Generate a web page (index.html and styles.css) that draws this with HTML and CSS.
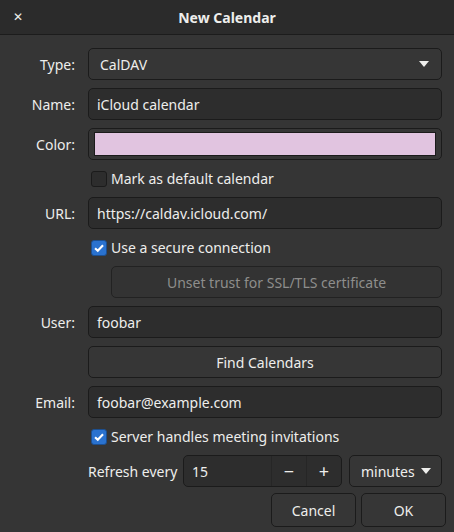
FILE: index.html
```html
<!DOCTYPE html>
<html lang="en">
<head>
    <meta charset="UTF-8">
    <title>New Calendar</title>
    <link rel="stylesheet" href="styles.css">
</head>
<body>
    <div class="titlebar">
        <span class="close">&#x2715;</span>
        <span class="title">New Calendar</span>
    </div>

    <div class="form">
        <label class="lbl">Type:</label>
        <div class="field combo">
            <span>CalDAV</span>
            <span class="arrow"></span>
        </div>

        <label class="lbl">Name:</label>
        <div class="field entry">iCloud calendar</div>

        <label class="lbl">Color:</label>
        <div class="field color-btn"><div class="swatch"></div></div>

        <div class="check-row">
            <span class="box"></span>
            <span>Mark as default calendar</span>
        </div>

        <label class="lbl">URL:</label>
        <div class="field entry">https://caldav.icloud.com/</div>

        <div class="check-row">
            <span class="box checked">
                <svg viewBox="0 0 16 16" width="16" height="16"><path d="M3.5 8.2 L6.6 11.2 L12.6 4.8" fill="none" stroke="#fff" stroke-width="2.4"/></svg>
            </span>
            <span>Use a secure connection</span>
        </div>

        <div class="field btn disabled indent">Unset trust for SSL/TLS certificate</div>

        <label class="lbl">User:</label>
        <div class="field entry">foobar</div>

        <div class="field btn">Find Calendars</div>

        <label class="lbl">Email:</label>
        <div class="field entry">foobar@example.com</div>

        <div class="check-row">
            <span class="box checked">
                <svg viewBox="0 0 16 16" width="16" height="16"><path d="M3.5 8.2 L6.6 11.2 L12.6 4.8" fill="none" stroke="#fff" stroke-width="2.4"/></svg>
            </span>
            <span>Server handles meeting invitations</span>
        </div>

        <div class="refresh-row">
            <span class="refresh-lbl">Refresh every</span>
            <div class="spin">
                <span class="spin-val">15</span>
                <span class="spin-btn">&minus;</span>
                <span class="spin-btn">+</span>
            </div>
            <div class="units">
                <span>minutes</span>
                <span class="arrow"></span>
            </div>
        </div>
    </div>

    <div class="actions">
        <div class="btn action">Cancel</div>
        <div class="btn action">OK</div>
    </div>
</body>
</html>
```

FILE: styles.css
```css
body {
    margin: 0;
    background-color: #353535;
    color: #eeeeec;
    font-family: "Noto Sans", "DejaVu Sans", sans-serif;
    font-size: 14px;
    width: 454px;
    height: 532px;
    overflow: hidden;
}

/* barra de título */
.titlebar {
    height: 34px;
    background-color: #2b2b2b;
    border-bottom: 1px solid #1c1c1c;
    display: flex;
    align-items: center;
    justify-content: center;
    position: relative;
}

.title {
    font-weight: bold;
}

.close {
    position: absolute;
    left: 13px;
    top: 8px;
    font-size: 12px;
    font-weight: bold;
}

/* formulario */
.form {
    display: grid;
    grid-template-columns: 75px 1fr;
    column-gap: 13px;
    row-gap: 8px;
    padding: 13px 12px 0 0;
}

.lbl {
    text-align: right;
    align-self: center;
}

.field {
    grid-column: 2;
    height: 32px;
    box-sizing: border-box;
    border: 1px solid #1b1b1b;
    border-radius: 5px;
    display: flex;
    align-items: center;
}

.entry {
    background-color: #2d2d2d;
    padding-left: 8px;
}

.combo {
    background-color: #363636;
    padding: 0 12px 0 11px;
    justify-content: space-between;
}

.arrow {
    width: 0;
    height: 0;
    border-left: 5px solid transparent;
    border-right: 5px solid transparent;
    border-top: 6px solid #eeeeec;
}

.color-btn {
    background-color: #363636;
    padding: 4px 5px;
}

.swatch {
    flex: 1;
    height: 100%;
    background-color: #e1c4e0;
    border: 1px solid #1b1b1b;
}

.btn {
    background-color: #363636;
    border: 1px solid #1b1b1b;
    border-radius: 5px;
    justify-content: center;
}

.btn.disabled {
    background-color: #333333;
    color: #8e8e8c;
    border-color: #222222;
}

.indent {
    margin-left: 23px;
}

/* casillas */
.check-row {
    grid-column: 2;
    height: 21px;
    display: flex;
    align-items: center;
    gap: 4px;
    padding-left: 3px;
}

.box {
    width: 14px;
    height: 14px;
    border: 1px solid #1b1b1b;
    border-radius: 3px;
    background-color: #2d2d2d;
    display: flex;
    align-items: center;
    justify-content: center;
}

.box.checked {
    background-color: #2a72cf;
    border-color: #1c4f90;
}

/* fila de refresco */
.refresh-row {
    grid-column: 2;
    display: flex;
    align-items: center;
    height: 32px;
}

.refresh-lbl {
    width: 95px;
}

.spin {
    display: flex;
    width: 159px;
    height: 32px;
    box-sizing: border-box;
    border: 1px solid #1b1b1b;
    border-radius: 5px;
    background-color: #2d2d2d;
    overflow: hidden;
}

.spin-val {
    flex: 1;
    padding-left: 8px;
    display: flex;
    align-items: center;
}

.spin-btn {
    width: 35px;
    box-sizing: border-box;
    border-left: 1px solid #262626;
    display: flex;
    align-items: center;
    justify-content: center;
    font-size: 18px;
}

.units {
    margin-left: 7px;
    flex: 1;
    height: 32px;
    box-sizing: border-box;
    border: 1px solid #1b1b1b;
    border-radius: 5px;
    background-color: #363636;
    display: flex;
    align-items: center;
    gap: 6px;
    padding-left: 11px;
}

/* botones de acción */
.actions {
    display: flex;
    justify-content: flex-end;
    gap: 5px;
    padding: 6px 8px 0 0;
}

.action {
    width: 85px;
    height: 34px;
    box-sizing: border-box;
    display: flex;
    align-items: center;
}
```
